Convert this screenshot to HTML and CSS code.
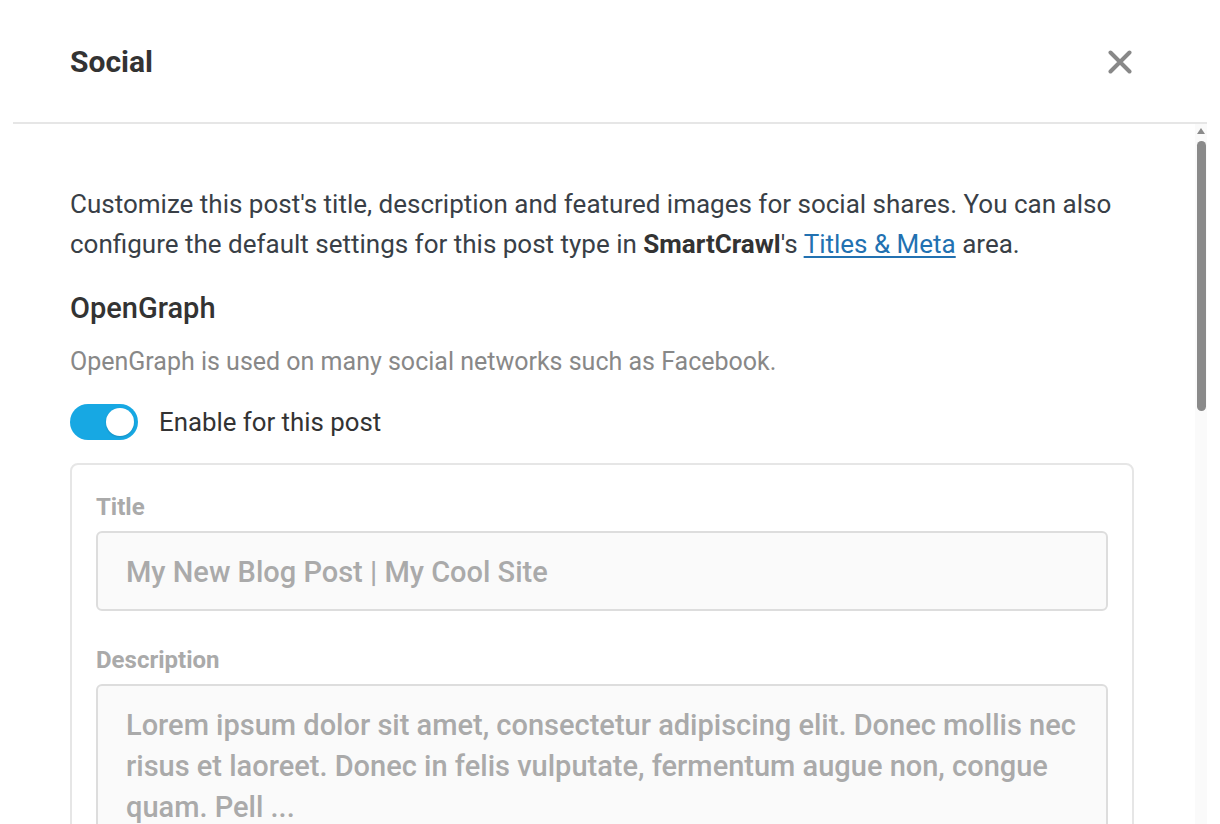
FILE: index.html
```html
<!DOCTYPE html>
<html lang="en">
<head>
<meta charset="utf-8">
<title>Social</title>
<link rel="stylesheet" href="styles.css">
</head>
<body>
<div class="modal">
  <header class="modal-header">
    <h1 class="modal-title">Social</h1>
    <button class="close" aria-label="Close">
      <svg width="24" height="24" viewBox="0 0 24 24"><path d="M2.5 2.5 L21.5 21.5 M21.5 2.5 L2.5 21.5" stroke="#888" stroke-width="4" stroke-linecap="round" fill="none"/></svg>
    </button>
  </header>
  <div class="modal-body">
    <div class="viewport">
      <div class="content">
        <p class="intro">Customize this post's title, description and featured images for social shares. You can also configure the default settings for this post type in <strong>SmartCrawl</strong>'s <a href="#">Titles &amp; Meta</a> area.</p>
        <h2 class="section-title">OpenGraph</h2>
        <p class="section-desc">OpenGraph is used on many social networks such as Facebook.</p>
        <label class="toggle-row">
          <span class="toggle"><span class="knob"></span></span>
          <span class="toggle-label">Enable for this post</span>
        </label>
        <div class="card">
          <div class="field">
            <div class="field-label">Title</div>
            <div class="input">My New Blog Post | My Cool Site</div>
          </div>
          <div class="field">
            <div class="field-label">Description</div>
            <div class="input textarea">Lorem ipsum dolor sit amet, consectetur adipiscing elit. Donec mollis nec risus et laoreet. Donec in felis vulputate, fermentum augue non, congue quam. Pell ...</div>
          </div>
        </div>
      </div>
    </div>
    <div class="scrollbar" aria-hidden="true">
      <span class="sb-arrow"></span>
      <span class="sb-thumb"></span>
    </div>
  </div>
</div>
</body>
</html>
```

FILE: styles.css
```css
html, body {
  margin: 0;
  padding: 0;
  background: #fff;
  height: 100%;
  overflow: hidden;
}
body {
  font-family: Roboto, "Liberation Sans", Arial, sans-serif;
  color: #3c434a;
}
.modal {
  margin-left: 13px;
  width: 1194px;
  height: 824px;
  display: flex;
  flex-direction: column;
  background: #fff;
}
.modal-header {
  height: 124px;
  flex: 0 0 auto;
  display: flex;
  align-items: center;
  justify-content: space-between;
  padding: 2px 75px 0 57px;
  box-sizing: border-box;
  border-bottom: 2px solid #e6e6e6;
}
.modal-title {
  margin: 0;
  font-size: 30px;
  font-weight: 700;
  color: #333;
  line-height: 1;
}
.close {
  border: 0;
  background: none;
  padding: 0;
  width: 24px;
  height: 24px;
  cursor: pointer;
  display: flex;
}
.modal-body {
  flex: 1 1 auto;
  display: flex;
  min-height: 0;
}
.viewport {
  flex: 1 1 auto;
  overflow: hidden;
}
.scrollbar {
  flex: 0 0 12px;
  background: #fafafa;
  display: flex;
  flex-direction: column;
  align-items: center;
  padding-top: 4px;
}
.sb-arrow {
  width: 0;
  height: 0;
  border-left: 4px solid transparent;
  border-right: 4px solid transparent;
  border-bottom: 6px solid #8a8a8a;
}
.sb-thumb {
  margin-top: 7px;
  width: 9px;
  height: 270px;
  border-radius: 5px;
  background: #8a8a8a;
}
.content {
  padding: 60px 61px 120px 57px;
}
.intro {
  margin: 0;
  font-size: 26px;
  line-height: 40px;
  color: #393f47;
}
.intro strong {
  font-weight: 700;
  color: #333;
}
.intro a {
  color: #2271b1;
  text-decoration: underline;
  text-underline-offset: 3px;
}
.section-title {
  margin: 24px 0 0;
  font-size: 29px;
  font-weight: 500;
  color: #333;
  line-height: 40px;
}
.section-desc {
  margin: 17px 0 0;
  font-size: 25px;
  line-height: 34px;
  color: #888;
}
.toggle-row {
  display: flex;
  align-items: center;
  gap: 21px;
  margin-top: 25px;
}
.toggle {
  width: 68px;
  height: 36px;
  border-radius: 18px;
  background: #17a8e3;
  position: relative;
  flex: 0 0 auto;
}
.knob {
  position: absolute;
  top: 4px;
  right: 4px;
  width: 28px;
  height: 28px;
  border-radius: 50%;
  background: #fff;
  box-shadow: 0 1px 2px rgba(0,0,0,0.15);
}
.toggle-label {
  font-size: 25.8px;
  color: #333;
  line-height: 36px;
}
.card {
  margin-top: 23px;
  border: 2px solid #e6e6e6;
  border-radius: 8px;
  padding: 24px 24px 30px;
}
.field + .field {
  margin-top: 32px;
}
.field-label {
  font-size: 24px;
  font-weight: 700;
  color: #aaa;
  line-height: 34px;
  margin-top: 1px;
}
.input {
  margin-top: 7px;
  border: 2px solid #ddd;
  border-radius: 6px;
  background: #fafafa;
  height: 80px;
  box-sizing: border-box;
  padding: 2px 28px 0;
  display: flex;
  align-items: center;
  font-size: 29px;
  font-weight: 500;
  color: #aaa;
}
.textarea {
  height: 180px;
  display: block;
  padding: 19px 28px;
  line-height: 41px;
}
```
